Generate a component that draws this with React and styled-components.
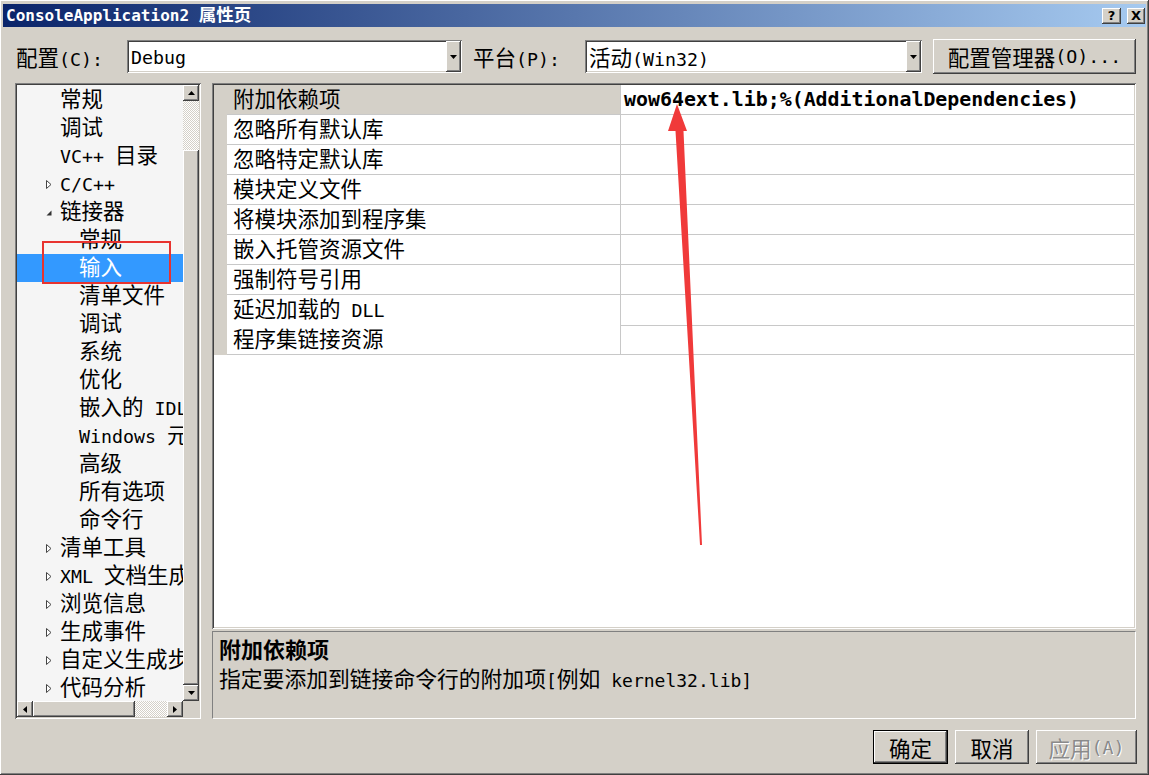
import React from "react";
import styled, { createGlobalStyle } from "styled-components";

const FACE = "#d4d0c8";

const raised = `box-shadow: inset -1px -1px #404040, inset 1px 1px #fff, inset -2px -2px #808080, inset 2px 2px ${FACE};`;
const sunken = `box-shadow: inset 1px 1px #808080, inset -1px -1px #fff, inset 2px 2px #404040, inset -2px -2px ${FACE};`;
const dither = `background: repeating-conic-gradient(#fff 0 25%, ${FACE} 0 50%) 0 0 / 2px 2px;`;

const GlobalStyle = createGlobalStyle`
  html, body { margin: 0; padding: 0; background: ${FACE}; }
  body {
    font-family: "DejaVu Sans Mono", "Noto Sans CJK SC", monospace;
    color: #000;
  }
  * { box-sizing: border-box; }
`;

const Window = styled.div`
  position: relative;
  width: 1149px;
  height: 775px;
  padding: 3px;
  background: ${FACE};
  display: flex;
  flex-direction: column;
  overflow: hidden;
  ${raised}
`;

const TitleBar = styled.div`
  height: 23px;
  margin-top: 1px;
  padding: 0 1px 0 3px;
  display: flex;
  align-items: center;
  background: linear-gradient(90deg, #0a246a, #a6caf0);
  color: #fff;
  font-weight: bold;
  font-size: 17.5px;
  line-height: 23px;
`;

const TitleText = styled.div`
  flex: 1;
  white-space: nowrap;
`;

const CaptionBtn = styled.div`
  width: ${(p) => p.$w}px;
  height: 16px;
  margin-left: ${(p) => p.$gap || 0}px;
  background: ${FACE};
  color: #000;
  font-family: "DejaVu Sans", sans-serif;
  font-size: 13px;
  font-weight: bold;
  line-height: 16px;
  text-align: center;
  ${raised}
`;

const Toolbar = styled.div`
  height: 35px;
  margin-top: 12px;
  padding: 0 10px 0 13px;
  display: flex;
  align-items: center;
  font-size: 21.5px;
`;

const Label = styled.div`
  width: ${(p) => p.$w}px;
  margin-left: ${(p) => p.$ml || 0}px;
  white-space: nowrap;
`;

const Combo = styled.div`
  width: ${(p) => p.$w}px;
  height: 33px;
  padding: 2px 1px 2px 4px;
  display: flex;
  align-items: center;
  background: #fff;
  ${sunken}
`;

const ComboText = styled.div`
  flex: 1;
  white-space: nowrap;
`;

const DropBtn = styled.div`
  width: 15px;
  align-self: stretch;
  margin: -1px 0;
  display: flex;
  align-items: center;
  justify-content: center;
  background: ${FACE};
  ${raised}
`;

const PushButton = styled.div`
  width: ${(p) => p.$w}px;
  height: ${(p) => p.$h || 34}px;
  margin-left: ${(p) => p.$ml || 0}px;
  display: flex;
  align-items: center;
  justify-content: center;
  background: ${FACE};
  font-size: 21.5px;
  white-space: nowrap;
  color: ${(p) => (p.$disabled ? "#8a8a8a" : "#000")};
  text-shadow: ${(p) => (p.$disabled ? "1px 1px #fff" : "none")};
  border: ${(p) => (p.$default ? "1px solid #000" : "none")};
  ${raised}
`;

const Body = styled.div`
  height: 636px;
  margin-top: 9px;
  padding: 0 10px 0 12px;
  display: flex;
  gap: 11px;
`;

const TreePanel = styled.div`
  width: 186px;
  height: 636px;
  padding: 2px;
  display: grid;
  grid-template-columns: 166px 16px;
  grid-template-rows: 616px 16px;
  background: ${FACE};
  ${sunken}
`;

const TreeList = styled.div`
  overflow: hidden;
  padding-top: 1px;
  background: #f5f5f5;
`;

const TreeRow = styled.div`
  height: 28px;
  padding-left: ${(p) => (p.$level === 2 ? 48 : 29)}px;
  display: flex;
  align-items: center;
  white-space: nowrap;
  font-size: 21.5px;
  line-height: 28px;
  background: ${(p) => (p.$selected ? "#3399ff" : "transparent")};
  color: ${(p) => (p.$selected ? "#fff" : "#000")};
`;

const ExpSlot = styled.div`
  width: 14px;
  flex: none;
  display: flex;
  align-items: center;
`;

const VScroll = styled.div`
  display: flex;
  flex-direction: column;
`;

const HScroll = styled.div`
  display: flex;
`;

const ScrollBtn = styled.div`
  width: 16px;
  height: 16px;
  flex: none;
  display: flex;
  align-items: center;
  justify-content: center;
  background: ${FACE};
  ${raised}
`;

const Track = styled.div`
  flex: ${(p) => (p.$size ? "none" : 1)};
  ${(p) => (p.$vertical ? "height" : "width")}: ${(p) => (p.$size ? `${p.$size}px` : "auto")};
  ${dither}
`;

const Thumb = styled.div`
  flex: ${(p) => (p.$size ? "none" : 1)};
  ${(p) => (p.$vertical ? "height" : "width")}: ${(p) => (p.$size ? `${p.$size}px` : "auto")};
  background: ${FACE};
  ${raised}
`;

const Corner = styled.div`
  background: ${FACE};
`;

const RightCol = styled.div`
  width: 924px;
  display: flex;
  flex-direction: column;
  gap: 2px;
`;

const GridPanel = styled.div`
  height: 546px;
  padding: 2px;
  background: #fff;
  ${sunken}
`;

const PropRow = styled.div`
  height: 30px;
  display: grid;
  grid-template-columns: 13px 394px 1fr;
`;

const Gutter = styled.div`
  background: ${FACE};
`;

const NameCell = styled.div`
  padding-left: 6px;
  border-bottom: 1px solid #c8c8c8;
  border-right: 1px solid #c8c8c8;
  background: ${(p) => (p.$selected ? FACE : "#fff")};
  font-size: 21.5px;
  line-height: 29px;
  white-space: nowrap;
`;

const ValueCell = styled.div`
  padding-left: 3px;
  border-bottom: 1px solid #c8c8c8;
  font-size: 19.9px;
  font-weight: bold;
  line-height: 29px;
  white-space: nowrap;
`;

const DescPanel = styled.div`
  height: 88px;
  padding: 4px 6px;
  background: ${FACE};
  border: 1px solid;
  border-color: #808080 #fff #fff #808080;
`;

const DescTitle = styled.div`
  font-size: 22px;
  font-weight: bold;
  line-height: 29px;
`;

const DescText = styled.div`
  font-size: 21.8px;
  line-height: 30px;
  white-space: nowrap;
`;

const Footer = styled.div`
  height: 34px;
  margin-top: 11px;
  padding-right: 9px;
  display: flex;
  justify-content: flex-end;
  gap: 7px;
`;

const Overlay = styled.svg`
  position: absolute;
  left: 0;
  top: 0;
  pointer-events: none;
`;

const Lat = styled.span`
  font-size: ${(p) => p.$size}px;
`;

const Mixed = ({ text, lat = 18.3 }) =>
  text
    .split(/([\x20-\x7e]+)/)
    .filter(Boolean)
    .map((part, i) =>
      /^[\x20-\x7e]+$/.test(part) ? (
        <Lat key={i} $size={lat}>
          {part}
        </Lat>
      ) : (
        <React.Fragment key={i}>{part}</React.Fragment>
      )
    );

const Arrow = ({ dir }) => {
  const pts = {
    up: "0,4 3.5,0 7,4",
    down: "0,0 7,0 3.5,4",
    left: "4,0 4,7 0,3.5",
    right: "0,0 0,7 4,3.5",
  }[dir];
  const horiz = dir === "left" || dir === "right";
  return (
    <svg width={horiz ? 4 : 7} height={horiz ? 7 : 4} viewBox={horiz ? "0 0 4 7" : "0 0 7 4"}>
      <polygon points={pts} fill="#000" />
    </svg>
  );
};

const Expander = ({ open }) =>
  open ? (
    <svg width="6" height="6" viewBox="0 0 6 6" style={{ marginTop: 2 }}>
      <polygon points="5.5,0.5 5.5,5.5 0.5,5.5" fill="#333" />
    </svg>
  ) : (
    <svg width="6" height="9" viewBox="0 0 6 9">
      <polygon points="0.5,0.5 5,4.5 0.5,8.5" fill="#fff" stroke="#444" strokeWidth="1" />
    </svg>
  );

const treeItems = [
  { text: "常规", level: 1 },
  { text: "调试", level: 1 },
  { text: "VC++ 目录", level: 1 },
  { text: "C/C++", level: 1, exp: "closed" },
  { text: "链接器", level: 1, exp: "open" },
  { text: "常规", level: 2 },
  { text: "输入", level: 2, selected: true },
  { text: "清单文件", level: 2 },
  { text: "调试", level: 2 },
  { text: "系统", level: 2 },
  { text: "优化", level: 2 },
  { text: "嵌入的 IDL", level: 2 },
  { text: "Windows 元数据", level: 2 },
  { text: "高级", level: 2 },
  { text: "所有选项", level: 2 },
  { text: "命令行", level: 2 },
  { text: "清单工具", level: 1, exp: "closed" },
  { text: "XML 文档生成器", level: 1, exp: "closed" },
  { text: "浏览信息", level: 1, exp: "closed" },
  { text: "生成事件", level: 1, exp: "closed" },
  { text: "自定义生成步骤", level: 1, exp: "closed" },
  { text: "代码分析", level: 1, exp: "closed" },
];

const props = [
  { name: "附加依赖项", value: "wow64ext.lib;%(AdditionalDependencies)" },
  { name: "忽略所有默认库" },
  { name: "忽略特定默认库" },
  { name: "模块定义文件" },
  { name: "将模块添加到程序集" },
  { name: "嵌入托管资源文件" },
  { name: "强制符号引用" },
  { name: "延迟加载的 DLL" },
  { name: "程序集链接资源" },
];

export default function App() {
  return (
    <>
      <GlobalStyle />
      <Window>
        <TitleBar>
          <TitleText>
            <Mixed text="ConsoleApplication2 属性页" lat={16} />
          </TitleText>
          <CaptionBtn $w={19}>?</CaptionBtn>
          <CaptionBtn $w={18} $gap={6}>X</CaptionBtn>
        </TitleBar>

        <Toolbar>
          <Label $w={111}>
            <Mixed text="配置(C):" />
          </Label>
          <Combo $w={335}>
            <ComboText>
              <Mixed text="Debug" />
            </ComboText>
            <DropBtn>
              <Arrow dir="down" />
            </DropBtn>
          </Combo>
          <Label $w={112} $ml={11}>
            <Mixed text="平台(P):" />
          </Label>
          <Combo $w={337}>
            <ComboText>
              <Mixed text="活动(Win32)" />
            </ComboText>
            <DropBtn>
              <Arrow dir="down" />
            </DropBtn>
          </Combo>
          <PushButton $w={203} $h={35} $ml={11}>
            <Mixed text="配置管理器(O)..." />
          </PushButton>
        </Toolbar>

        <Body>
          <TreePanel>
            <TreeList>
              {treeItems.map((item, i) => (
                <TreeRow key={i} $level={item.level} $selected={item.selected}>
                  <ExpSlot>{item.exp && <Expander open={item.exp === "open"} />}</ExpSlot>
                  <span>
                    <Mixed text={item.text} />
                  </span>
                </TreeRow>
              ))}
            </TreeList>
            <VScroll>
              <ScrollBtn>
                <Arrow dir="up" />
              </ScrollBtn>
              <Track $vertical $size={49} />
              <Thumb $vertical />
              <ScrollBtn>
                <Arrow dir="down" />
              </ScrollBtn>
            </VScroll>
            <HScroll>
              <ScrollBtn>
                <Arrow dir="left" />
              </ScrollBtn>
              <Thumb $size={102} />
              <Track />
              <ScrollBtn>
                <Arrow dir="right" />
              </ScrollBtn>
            </HScroll>
            <Corner />
          </TreePanel>

          <RightCol>
            <GridPanel>
              {props.map((p, i) => (
                <PropRow key={i}>
                  <Gutter />
                  <NameCell $selected={i === 0}>
                    <Mixed text={p.name} />
                  </NameCell>
                  <ValueCell>{p.value || ""}</ValueCell>
                </PropRow>
              ))}
            </GridPanel>
            <DescPanel>
              <DescTitle>附加依赖项</DescTitle>
              <DescText>
                <Mixed text="指定要添加到链接命令行的附加项[例如 kernel32.lib]" lat={18} />
              </DescText>
            </DescPanel>
          </RightCol>
        </Body>

        <Footer>
          <PushButton $w={75} $default>
            确定
          </PushButton>
          <PushButton $w={74}>取消</PushButton>
          <PushButton $w={101} $disabled>
            <Mixed text="应用(A)" />
          </PushButton>
        </Footer>

        <Overlay width="1149" height="775" viewBox="0 0 1149 775">
          <rect x="43" y="242" width="127" height="41" fill="none" stroke="#e8332f" strokeWidth="2" />
          <polygon
            points="677,104 687,131 683.5,131 702,545 700,545 675.5,131 668,131"
            fill="#f03a3a"
          />
        </Overlay>
      </Window>
    </>
  );
}
